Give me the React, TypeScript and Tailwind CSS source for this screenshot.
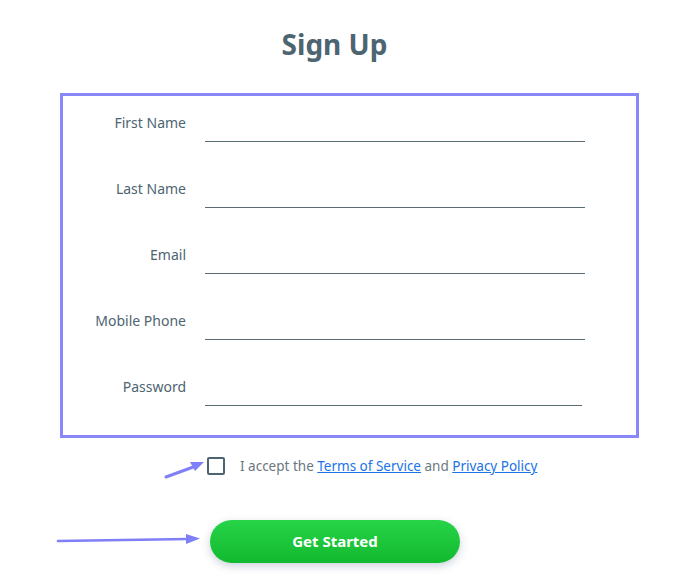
import React from 'react';

const fields = [
  { label: 'First Name', type: 'text', width: 'w-[380px]' },
  { label: 'Last Name', type: 'text', width: 'w-[380px]' },
  { label: 'Email', type: 'email', width: 'w-[380px]' },
  { label: 'Mobile Phone', type: 'tel', width: 'w-[380px]' },
  { label: 'Password', type: 'password', width: 'w-[377px]' },
];

const App = () => {
  return (
    <div className="relative w-[689px] h-[586px] bg-white overflow-hidden" style={{ fontFamily: '"Noto Sans", "Open Sans", sans-serif' }}>
      <h1 className="pt-[25px] pr-[20px] text-center text-[28px] leading-[38px] font-bold text-[#4d6471]">Sign Up</h1>

      <form className="ml-[60px] mt-[30px] w-[579px] border-[3px] border-[#8888fb] pt-[17px] pb-[29px]">
        <div className="flex flex-col gap-[37px]">
          {fields.map((f) => (
            <div key={f.label} className="flex items-start">
              <label className="w-[123px] text-right text-[14px] leading-[20px] text-[#4d6471]">{f.label}</label>
              <input
                type={f.type}
                className={`ml-[19px] h-[29px] ${f.width} border-b border-[#5a6a74] outline-none`}
              />
            </div>
          ))}
        </div>
      </form>

      <div className="flex items-center mt-[18px] pl-[207px]">
        <span className="w-[18px] h-[18px] rounded-[2px] border-2 border-[#4d6471] bg-white" />
        <span className="ml-[15px] text-[13.5px] leading-[20px] text-[#6b7780]">
          I accept the <a className="text-[#1a73e8] underline" href="#">Terms of Service</a> and{' '}
          <a className="text-[#1a73e8] underline" href="#">Privacy Policy</a>
        </span>
      </div>

      <div className="mt-[44px] pl-[210px]">
        <button
          type="button"
          className="w-[250px] h-[43px] rounded-full bg-gradient-to-b from-[#27d448] to-[#10b92d] text-white font-bold text-[15px] shadow-[0_3px_8px_rgba(60,70,120,0.25)]"
        >
          Get Started
        </button>
      </div>

      {/* annotation arrows */}
      <svg className="absolute left-0 top-0 pointer-events-none" width="689" height="586">
        <g stroke="#7f7ff7" fill="#7f7ff7" strokeWidth="3" strokeLinecap="round">
          <line x1="166" y1="477" x2="196" y2="466" />
          <polygon points="204,462 190,462 195,471" stroke="none" />
          <line x1="58" y1="541" x2="188" y2="539" strokeWidth="2.5" />
          <polygon points="200,538.5 186,534 186,544" stroke="none" />
        </g>
      </svg>
    </div>
  );
};

export default App;
